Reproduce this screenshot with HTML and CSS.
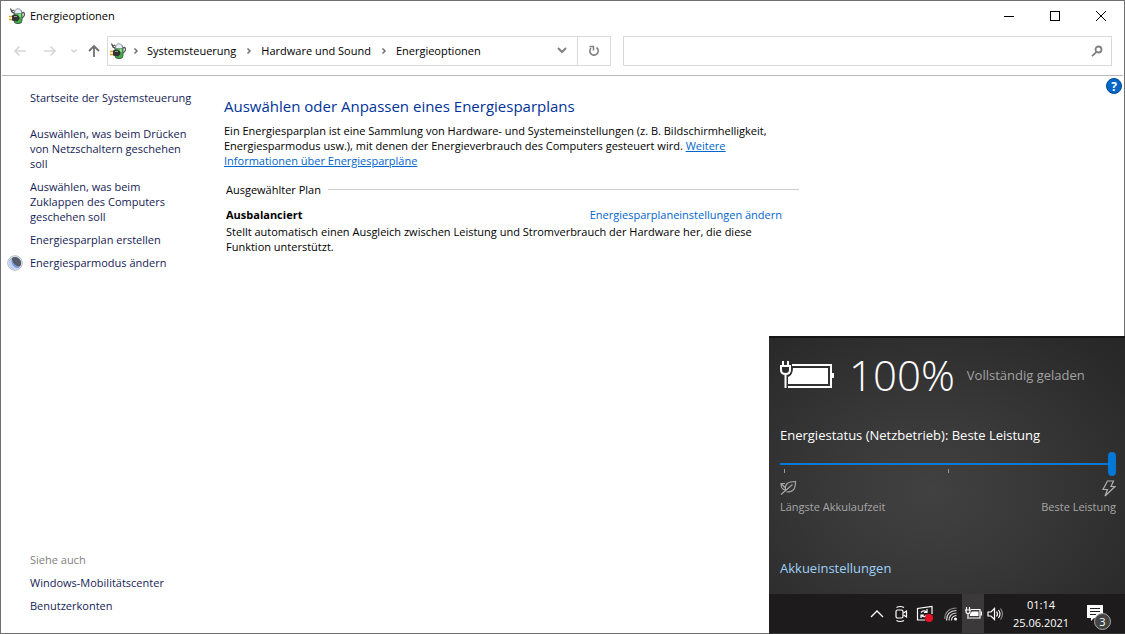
FILE: index.html
```html
<!DOCTYPE html>
<html lang="de">
<head>
<meta charset="utf-8">
<title>Energieoptionen</title>
<link rel="stylesheet" href="styles.css">
</head>
<body>
<svg class="defs" width="0" height="0" aria-hidden="true">
  <symbol id="power" viewBox="0 0 16 16">
    <path d="M1.500 .5 3 4 6 5.500M3 3l2-1" stroke="#444" stroke-width="1.200" fill="none"/>
    <path d="M12.500 5c3-1.500 3.500 1 2.500 3s-2 2-3 2" stroke="#555" stroke-width="1.300" fill="none"/>
    <rect x="5" y="2" width="8" height="13.500" rx="3" fill="#3fae49" stroke="#46604a"/>
    <path d="M5.500 4.500c0-5 7-5 7 0l-1 1H6z" fill="#e8ecf6" stroke="#7c8594" stroke-width=".8"/>
    <path d="M9.500 6h2.500v3H9.500z" fill="#7be06f"/>
    <path d="M0 8.500h4M0 11.500h4" stroke="#d8a21c" stroke-width="1.600"/>
    <path d="M3 7.500 6 6.500l4 1.500 .5 3L8 13.500l-5-1z" fill="#333"/>
    <path d="M5 8.500h3" stroke="#999"/>
  </symbol>
</svg>
<div class="window">
  <header class="titlebar">
    <svg class="app-icon" width="16" height="16"><use href="#power"/></svg>
    <h1 class="window-title">Energieoptionen</h1>
    <div class="caption-buttons">
      <button class="caption" aria-label="Minimieren"><svg width="10" height="10" shape-rendering="crispEdges"><path d="M0 5.500h10" stroke="#000"/></svg></button>
      <button class="caption" aria-label="Maximieren"><svg width="10" height="10" shape-rendering="crispEdges"><path d="M.5.500h9v9h-9z" fill="none" stroke="#000"/></svg></button>
      <button class="caption" aria-label="Schließen"><svg width="10" height="10"><path d="M0 0l10 10M10 0 0 10" stroke="#000"/></svg></button>
    </div>
  </header>
  <nav class="navbar" aria-label="Navigation">
    <div class="history">
      <button class="nav-button" aria-label="Zurück" disabled><svg width="14" height="12"><path d="M13 6H2M6.500 1.500 2 6l4.500 4.500" fill="none" stroke="#d6d6d6" stroke-width="1.600"/></svg></button>
      <button class="nav-button" aria-label="Vorwärts" disabled><svg width="14" height="12"><path d="M1 6h11M7.500 1.500 12 6l-4.500 4.500" fill="none" stroke="#d6d6d6" stroke-width="1.600"/></svg></button>
      <button class="nav-button recent" aria-label="Zuletzt besucht"><svg width="8" height="6"><path d="M1.500 1.500 4 4l2.500-2.500" fill="none" stroke="#cfcfcf" stroke-width="1.400"/></svg></button>
      <button class="nav-button up" aria-label="Nach oben"><svg width="12" height="13"><path d="M6 13V2M1 7l5-5 5 5" fill="none" stroke="#707070" stroke-width="1.800"/></svg></button>
    </div>
    <div class="address">
      <svg class="app-icon" width="16" height="16"><use href="#power"/></svg>
      <svg class="chevron" width="6" height="8"><path d="M1.500 1.500 4 4 1.500 6.500" fill="none" stroke="#707070" stroke-width="1.500"/></svg>
      <a class="crumb" href="#">Systemsteuerung</a>
      <svg class="chevron" width="6" height="8"><path d="M1.500 1.500 4 4 1.500 6.500" fill="none" stroke="#707070" stroke-width="1.500"/></svg>
      <a class="crumb" href="#">Hardware und Sound</a>
      <svg class="chevron" width="6" height="8"><path d="M1.500 1.500 4 4 1.500 6.500" fill="none" stroke="#707070" stroke-width="1.500"/></svg>
      <a class="crumb" href="#">Energieoptionen</a>
      <button class="address-drop" aria-label="Vorherige Orte"><svg width="10" height="7"><path d="M1 1l4 4 4-4" fill="none" stroke="#808080" stroke-width="2"/></svg></button>
      <button class="refresh" aria-label="Aktualisieren"><svg width="12" height="12"><path d="M8.500 2.500A4.200 4.200 0 1 1 3 3" fill="none" stroke="#808080" stroke-width="1.600"/><path d="M1.500 1.500H5.500V5.500" fill="none" stroke="#808080" stroke-width="1.500"/></svg></button>
    </div>
    <label class="search">
      <input class="search-input" type="search" aria-label="Suchen">
      <svg class="search-icon" width="12" height="12"><circle cx="7.500" cy="4.500" r="3" fill="none" stroke="#808080" stroke-width="1.800"/><path d="M5.500 7 1 11.200" stroke="#808080" stroke-width="1.800"/></svg>
    </label>
  </nav>
  <div class="content">
    <aside class="sidebar">
      <a class="task home" href="#">Startseite der Systemsteuerung</a>
      <a class="task" href="#">Auswählen, was beim Drücken von Netzschaltern geschehen soll</a>
      <a class="task" href="#">Auswählen, was beim Zuklappen des Computers geschehen soll</a>
      <a class="task" href="#">Energiesparplan erstellen</a>
      <a class="task with-icon" href="#"><svg class="moon" width="16" height="16" viewBox="0 0 16 16"><circle cx="8" cy="8" r="7.300" fill="#e3e8ee" stroke="#b4bcc6"/><circle cx="8" cy="8" r="6" fill="#7d9bdc"/><path d="M2.500 6a6 6 0 0 0 8 7.500C6 12 4 9 4.500 4z" fill="#c3d6fa"/><path d="M5 3A6 6 0 0 1 13 11.500C9 11.500 5 8 5 3z" fill="#565a64"/></svg>Energiesparmodus ändern</a>
      <div class="see-also">
        <span class="see-title">Siehe auch</span>
        <a class="task" href="#">Windows-Mobilitätscenter</a>
        <a class="task" href="#">Benutzerkonten</a>
      </div>
    </aside>
    <main class="main">
      <h2 class="heading">Auswählen oder Anpassen eines Energiesparplans</h2>
      <p class="intro">Ein Energiesparplan ist eine Sammlung von Hardware- und Systemeinstellungen (z. B. Bildschirmhelligkeit, Energiesparmodus usw.), mit denen der Energieverbrauch des Computers gesteuert wird. <a class="more" href="#">Weitere Informationen über Energiesparpläne</a></p>
      <section class="plans">
        <h3 class="group-title">Ausgewählter Plan</h3>
        <div class="plan-row">
          <strong class="plan-name">Ausbalanciert</strong>
          <a class="plan-link" href="#">Energiesparplaneinstellungen ändern</a>
        </div>
        <p class="plan-text">Stellt automatisch einen Ausgleich zwischen Leistung und Stromverbrauch der Hardware her, die diese Funktion unterstützt.</p>
      </section>
    </main>
    <button class="help" aria-label="Hilfe">?</button>
  </div>
</div>
<div class="overlay">
  <section class="flyout" aria-label="Akku">
    <div class="charge">
      <svg width="54" height="30" viewBox="0 0 54 30" fill="none" stroke="#fff"><path d="M12 5H51V27H8" stroke-width="2"/><path d="M52 13h2v5h-2z" fill="#fff" stroke="none"/><path d="M13 8H48V24H8V17q5-2 5-9z" fill="#fff" stroke="none"/><path d="M0 6h11M3 1v5M8 1v5" stroke-width="2"/><path d="M1 6v4q0 4 4.500 4T10 10V6M5.500 14v14" stroke-width="2"/></svg>
      <span class="percent">100%</span>
      <span class="charge-state">Vollständig geladen</span>
    </div>
    <label class="power-label" for="power-mode">Energiestatus (Netzbetrieb): Beste Leistung</label>
    <input class="slider" id="power-mode" type="range" min="0" max="2" value="2">
    <div class="ticks"><i class="tick"></i><i class="tick"></i><i class="tick"></i></div>
    <div class="ends">
      <span class="end"><svg width="17" height="15" fill="none" stroke="#a6a6a6" stroke-width="1.200"><path d="M5.500 10.500C4.500 4 8 1.500 15.500 1.500c0 7-1.500 10.500-9 10.500M1 14.500 12.500 4.500M5 3.500H1c0 4.500 1 6 4 6.500M1.500 4l3.500 3.500"/></svg>Längste Akkulaufzeit</span>
      <span class="end right"><svg width="14" height="17" fill="none" stroke="#b0b0b0" stroke-width="1.200"><path d="M5.500 1h6L9 6.500h4L3 16l2.500-6.500H1z"/></svg>Beste Leistung</span>
    </div>
    <a class="battery-link" href="#">Akkueinstellungen</a>
  </section>
  <footer class="taskbar">
    <button class="tray" aria-label="Ausgeblendete Symbole"><svg width="14" height="8"><path d="M1 7l6-6 6 6" fill="none" stroke="#fff" stroke-width="1.300"/></svg></button>
    <button class="tray" aria-label="Besprechung"><svg width="14" height="18" fill="none" stroke="#fff" stroke-width="1.200"><rect x="2" y="5" width="7" height="8" rx="1.500"/><path d="M9.500 8 12.500 6v6L9.500 10M2.500 2.500Q6 .5 10 2.500M2.500 15.500q3.500 2 7.500 0"/></svg></button>
    <button class="tray" aria-label="Windows Update"><svg width="18" height="18" fill="none" stroke="#fff" stroke-width="1.200"><path d="M9 15H1.500V3.500L16 1.500V9"/><path d="M5 7.500q2.500-3 5.500-.5M11 4v3.500H8M11 10q-2.500 3-5.500.5M5 13v-3h3"/><circle cx="13" cy="13" r="4" fill="#e81123" stroke="none"/></svg></button>
    <button class="tray wlan" aria-label="WLAN"><svg width="14" height="14" fill="none" stroke="#ddd" stroke-width="1.200"><circle cx="11.500" cy="12" r="1.500" fill="#fff" stroke="none"/><path d="M7.500 13.500Q7.500 9 12.500 8.500M5 13.500Q5 6.500 12.500 6M2.500 13.500Q2.500 4 12.500 3.500"/><path d="M.7 12Q1 1.500 12.500 1" stroke="#888"/></svg></button>
    <button class="tray active" aria-label="Akku"><svg width="17" height="13" fill="none" stroke="#fff" stroke-width="1.200"><path d="M6 2.500h9v8.500H4"/><path d="M7 4.500h6.500v4.500H5V7z" fill="#fff" stroke="none"/><path d="M15.500 5h1v3h-1M0 3h6M1.500 0v3M4.500 0v3M1 3v1.500q0 2 2 2t2-2V3M3 6.500V12"/></svg></button>
    <button class="tray" aria-label="Lautstärke"><svg width="18" height="14" fill="none" stroke="#fff" stroke-width="1.200"><path d="M1 5h3l3.500-3.500v11L4 9H1zM9.500 4.500q2 2.500 0 5M11.500 3q3 4 0 8"/><path d="M13.500 1.500q4 5.500 0 11" stroke="#888"/></svg></button>
    <time class="clock" datetime="2021-06-25T01:14"><span>01:14</span><span>25.06.2021</span></time>
    <button class="notify" aria-label="3 Benachrichtigungen"><svg width="17" height="17"><path d="M0 0h16v13H7l-3 3v-3H0z" fill="#fff"/><path d="M3 3.500h10M3 6.500h10M3 9.500h6" stroke="#222" stroke-width="1.200"/></svg><span class="badge">3</span></button>
  </footer>
</div>
</body>
</html>
```
FILE: styles.css
```css
* { box-sizing: border-box; }
body {
  margin: 0;
  min-height: 100vh;
  display: flex;
  position: relative;
  font: 11px/15px "Open Sans", "Noto Sans", sans-serif;
  color: #000;
}
h1, h2, h3, p { margin: 0; font-weight: 400; font-size: inherit; }
a { text-decoration: none; color: inherit; }
svg { display: block; flex: none; }
button {
  display: flex;
  align-items: center;
  justify-content: center;
  padding: 0;
  border: 0;
  background: none;
  color: inherit;
  font: inherit;
}
.defs { position: absolute; }
.window {
  flex: 1;
  display: flex;
  flex-direction: column;
  border: 1px solid #707070;
  background: #fff;
}
.titlebar { display: flex; align-items: center; height: 29px; padding-left: 8px; }
.window-title { flex: 1; margin-left: 5px; }
.caption-buttons { display: flex; height: 100%; }
.caption { width: 46px; }
.navbar {
  display: flex;
  align-items: center;
  height: 46px;
  margin: 0 1px;
  padding: 0 11px 4px 3px;
  border-bottom: 1px solid #b9b9b9;
}
.history { display: flex; align-items: center; width: 102px; }
.nav-button { width: 30px; height: 30px; }
.recent { width: 17px; }
.up { width: 24px; }
.address { flex: 1; display: flex; align-items: center; height: 30px; padding-left: 2px; border: 1px solid #d9d9d9; }
.chevron { margin: 0 9px 0 10px; }
.address .app-icon + .chevron { margin: 0 8px 0 7px; }
.address-drop { margin-left: auto; width: 30px; height: 28px; }
.refresh { width: 33px; height: 28px; border-left: 1px solid #d9d9d9; }
.search { flex: 0 0 489px; display: flex; align-items: center; height: 30px; margin-left: 12px; padding-right: 8px; border: 1px solid #d9d9d9; }
.search-input { flex: 1; height: 100%; border: 0; padding: 0 6px; outline: 0; background: none; font: inherit; }
.content { flex: 1; display: flex; }
.sidebar { flex: 0 0 223px; display: flex; flex-direction: column; gap: 8px; padding: 14px 30px 20px 29px; color: #151c55; }
.home { margin-bottom: 13px; }
.with-icon { display: flex; margin-left: -23px; gap: 7px; }
.see-also { display: flex; flex-direction: column; gap: 8px; margin-top: auto; }
.see-title { color: #808080; }
.main { flex: 0 0 575px; padding-top: 20px; }
.heading { font-size: 15px; line-height: 20px; color: #003399; }
.intro { margin-top: 7px; padding-right: 12px; }
.more { color: #0066cc; text-decoration: underline; }
.plans { margin: 14px 0 0 2px; }
.group-title { display: flex; align-items: center; gap: 7px; }
.group-title::after { content: ""; flex: 1; height: 1px; background: #cdcdcd; }
.plan-row { display: flex; justify-content: space-between; margin: 10px 17px 2px 0; }
.plan-name { font-weight: 700; }
.plan-link { color: #0066cc; }
.plan-text { margin-right: 17px; }
.help { width: 16px; height: 16px; margin: 2px 2px 0 auto; border: 1px solid #00498e; border-radius: 50%; background: #0067c8; color: #fff; font-size: 12px; font-weight: 700; }
.overlay { position: absolute; right: 0; bottom: 0; width: 356px; color: #fff; }
.flyout {
  padding: 19px 9px 17px 11px;
  border-top: 2px solid #161616;
  background: radial-gradient(ellipse at 45% 60%, #414141 0%, #393939 35%, #262626 100%);
}
.charge { display: flex; align-items: center; height: 36px; }
.percent { margin-left: 15px; font-size: 42px; line-height: 36px; font-weight: 300; }
.charge-state { margin-left: 12px; font-size: 13px; color: #a2a2a2; }
.power-label { display: block; margin-top: 33px; font-size: 13px; line-height: 18px; }
.slider { display: block; appearance: none; width: 100%; height: 24px; margin: 8px 0 0; background: linear-gradient(#0078d7, #0078d7) center / 100% 2px no-repeat; }
.slider::-webkit-slider-thumb { appearance: none; width: 8px; height: 24px; border-radius: 4px; background: #0078d7; }
.ticks { display: flex; justify-content: space-between; height: 4px; margin: -7px 3px 7px 4px; }
.tick { width: 1px; background: #999; }
.tick:last-child { visibility: hidden; }
.ends { display: flex; justify-content: space-between; color: #a6a6a6; }
.end { display: flex; flex-direction: column; justify-content: space-between; height: 35px; line-height: 17px; }
.right { align-items: flex-end; }
.battery-link { display: block; margin-top: 44px; font-size: 13px; line-height: 18px; color: #9fd0f7; }
.taskbar { display: flex; align-items: center; height: 40px; padding: 0 5px 0 96px; background: #1d1b1b; border-bottom: 1px solid #333; }
.tray { width: 24px; height: 39px; }
.wlan { width: 25px; padding-left: 3px; }
.active { width: 22px; background: #3b3939; }
.clock { flex: 1; display: flex; flex-direction: column; align-items: center; padding-left: 4px; line-height: 18px; }
.notify { position: relative; width: 50px; height: 39px; }
.badge { position: absolute; left: 24px; top: 19px; width: 17px; height: 17px; border: 1px solid #aaa; border-radius: 50%; background: #444; line-height: 15px; }
```
